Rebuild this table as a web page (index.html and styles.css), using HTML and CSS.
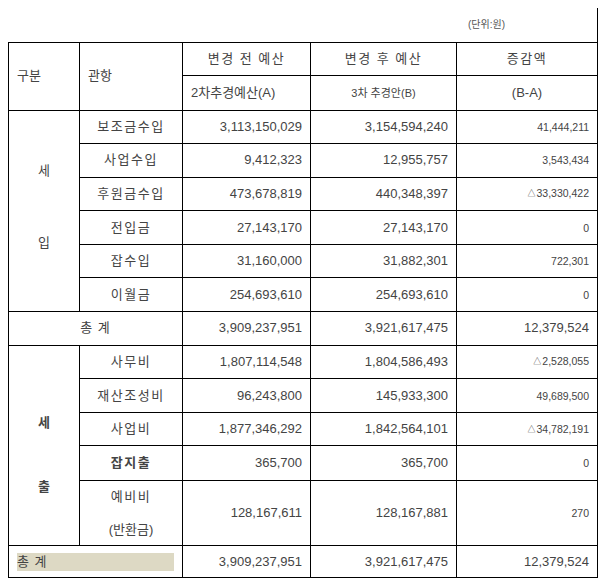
FILE: index.html
```html
<!DOCTYPE html>
<html lang="ko">
<head>
<meta charset="utf-8">
<title>예산 변경</title>
<link rel="stylesheet" href="styles.css">
</head>
<body>
<table class="budget">
  <colgroup>
    <col class="c1"><col class="c2"><col class="c3"><col class="c4"><col class="c5">
  </colgroup>
  <tr class="r-unit">
    <td colspan="5" class="unit">(단위:원)</td>
  </tr>
  <tr class="r-h1">
    <td rowspan="2" class="hl">구분</td>
    <td rowspan="2" class="hl">관항</td>
    <td class="hc sp">변경 전 예산</td>
    <td class="hc sp">변경 후 예산</td>
    <td class="hc sp">증감액</td>
  </tr>
  <tr class="r-h2">
    <td class="hl">2차추경예산(A)</td>
    <td class="hc small">3차 추경안(B)</td>
    <td class="hc">(B-A)</td>
  </tr>
  <tr class="r">
    <td rowspan="6" class="grp"><div class="grp-in in"><span>세</span><span>입</span></div></td>
    <td class="lbl">보조금수입</td>
    <td class="num">3,113,150,029</td>
    <td class="num">3,154,594,240</td>
    <td class="num sm">41,444,211</td>
  </tr>
  <tr class="r">
    <td class="lbl">사업수입</td>
    <td class="num">9,412,323</td>
    <td class="num">12,955,757</td>
    <td class="num sm">3,543,434</td>
  </tr>
  <tr class="r">
    <td class="lbl">후원금수입</td>
    <td class="num">473,678,819</td>
    <td class="num">440,348,397</td>
    <td class="num sm"><span class="tri">△</span>33,330,422</td>
  </tr>
  <tr class="r">
    <td class="lbl">전입금</td>
    <td class="num">27,143,170</td>
    <td class="num">27,143,170</td>
    <td class="num sm">0</td>
  </tr>
  <tr class="r">
    <td class="lbl">잡수입</td>
    <td class="num">31,160,000</td>
    <td class="num">31,882,301</td>
    <td class="num sm">722,301</td>
  </tr>
  <tr class="r">
    <td class="lbl">이월금</td>
    <td class="num">254,693,610</td>
    <td class="num">254,693,610</td>
    <td class="num sm">0</td>
  </tr>
  <tr class="r">
    <td colspan="2" class="total">총 계</td>
    <td class="num">3,909,237,951</td>
    <td class="num">3,921,617,475</td>
    <td class="num">12,379,524</td>
  </tr>
  <tr class="r">
    <td rowspan="5" class="grp"><div class="grp-in out"><span>세</span><span>출</span></div></td>
    <td class="lbl">사무비</td>
    <td class="num">1,807,114,548</td>
    <td class="num">1,804,586,493</td>
    <td class="num sm"><span class="tri">△</span>2,528,055</td>
  </tr>
  <tr class="r">
    <td class="lbl">재산조성비</td>
    <td class="num">96,243,800</td>
    <td class="num">145,933,300</td>
    <td class="num sm">49,689,500</td>
  </tr>
  <tr class="r">
    <td class="lbl">사업비</td>
    <td class="num">1,877,346,292</td>
    <td class="num">1,842,564,101</td>
    <td class="num sm"><span class="tri">△</span>34,782,191</td>
  </tr>
  <tr class="r-b">
    <td class="lbl bold">잡지출</td>
    <td class="num">365,700</td>
    <td class="num">365,700</td>
    <td class="num sm">0</td>
  </tr>
  <tr class="r-res">
    <td class="lbl"><div class="two"><span class="sp">예비비</span><span class="paren">(반환금)</span></div></td>
    <td class="num">128,167,611</td>
    <td class="num">128,167,881</td>
    <td class="num sm">270</td>
  </tr>
  <tr class="r-last">
    <td colspan="2" class="total-last"><span class="hilite">총 계</span></td>
    <td class="num">3,909,237,951</td>
    <td class="num">3,921,617,475</td>
    <td class="num">12,379,524</td>
  </tr>
</table>
</body>
</html>
```

FILE: styles.css
```css
html, body {
  margin: 0;
  padding: 0;
  background: #ffffff;
}
body {
  padding: 8px;
  font-family: "Liberation Sans", "Noto Sans CJK KR", sans-serif;
  color: #444444;
}
.budget {
  border-collapse: collapse;
  table-layout: fixed;
  width: 589px;
}
.c1 { width: 71px; }
.c2 { width: 103px; }
.c3 { width: 128px; }
.c4 { width: 146px; }
.c5 { width: 141px; }

.budget td {
  border: 1px solid #000000;
  padding: 0 8px;
  vertical-align: middle;
  font-size: 13px;
  line-height: 16px;
  white-space: nowrap;
}
.budget td.unit {
  border-top: none;
  border-left: none;
  border-bottom: 1px solid #000000;
  text-align: right;
  font-size: 10px;
  color: #555555;
  padding-right: 92px;
}
.r-unit { height: 34px; }
.r-h1 { height: 33px; }
.r-h2 { height: 35px; }
.r { height: 33.6px; }
.r-b { height: 35px; }
.r-res { height: 65px; }
.r-last { height: 32px; }

.hl { text-align: left; }
.hc { text-align: center; }
.sp { letter-spacing: 1.5px; }
.budget td.small { font-size: 11px; }

.lbl {
  text-align: center;
  font-size: 12px;
  letter-spacing: 1.5px;
}
.bold { font-weight: bold; }
.num { text-align: right; }
.budget td.sm { font-size: 10.5px; }
.tri {
  font-size: 8px;
  margin-right: 1px;
  vertical-align: 1px;
}

.grp { text-align: center; padding: 0; }
.grp-in {
  display: flex;
  flex-direction: column;
  align-items: center;
  line-height: 20px;
}
.grp-in.in { gap: 52px; padding-bottom: 8px; }
.grp-in.out { gap: 44px; padding-top: 18px; font-weight: bold; }

.total { text-align: center; letter-spacing: 1px; }

.two {
  display: flex;
  flex-direction: column;
  align-items: center;
  gap: 17px;
}
.paren { letter-spacing: 0; }

.total-last { padding: 0 7px 0 8px; }
.hilite {
  display: block;
  background: #ddd9c4;
  line-height: 18px;
  letter-spacing: 1px;
}
```
